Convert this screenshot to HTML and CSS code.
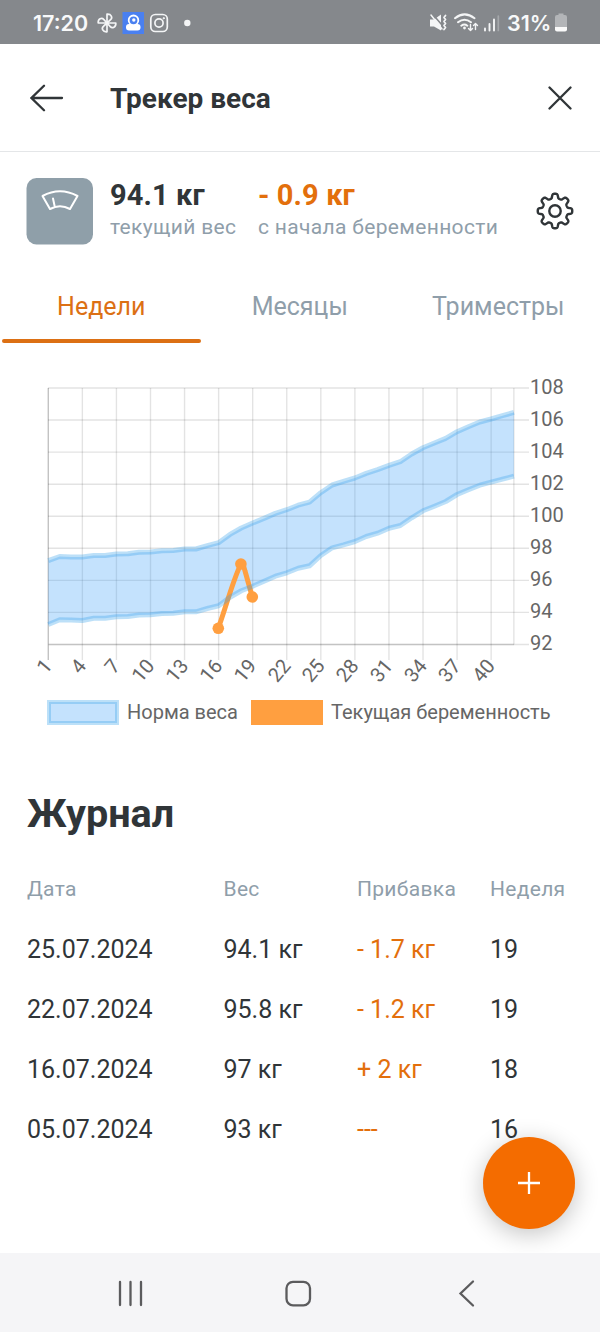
FILE: index.html
```html
<!DOCTYPE html>
<html lang="ru">
<head>
<meta charset="utf-8">
<title>Трекер веса</title>
<link rel="stylesheet" href="styles.css">
</head>
<body>
<div class="screen">
  <div class="status">
    <span class="clock">17:20</span>
    <svg class="status-left" width="100" height="26" viewBox="94 10 100 26" fill="none" stroke="#f4f5f6" stroke-width="1.7" stroke-linecap="round" stroke-linejoin="round">
      <path d="M107 23V14.200c4.400-.4 5.800 3.600 3.600 5.500L107 23"/>
      <path d="M107 23V14.200c4.400-.4 5.800 3.600 3.600 5.500L107 23" transform="rotate(90 107 23)"/>
      <path d="M107 23V14.200c4.400-.4 5.800 3.600 3.600 5.500L107 23" transform="rotate(180 107 23)"/>
      <path d="M107 23V14.200c4.400-.4 5.800 3.600 3.600 5.500L107 23" transform="rotate(270 107 23)"/>
      <rect x="122.500" y="12" width="21.500" height="22" fill="#4a80f0" stroke="none"/>
      <rect x="126" y="24" width="14.500" height="6.500" rx="3" fill="#fff" stroke="none"/>
      <circle cx="133.500" cy="20.300" r="4.800" fill="#4a80f0" stroke="#fff" stroke-width="1.800"/>
      <circle cx="133.800" cy="20" r="1.700" fill="#fff" stroke="none"/>
      <rect x="150.800" y="14.500" width="16.500" height="17" rx="4.500"/>
      <circle cx="159" cy="23" r="4.100"/>
      <circle cx="163.700" cy="18.200" r=".7" fill="#f4f5f6" stroke-width=".8"/>
      <circle cx="187.300" cy="23" r="3.200" fill="#f4f5f6" stroke="none"/>
    </svg>
    <svg class="status-right" width="73" height="26" viewBox="428 10 73 26" fill="none" stroke="#f4f5f6" stroke-width="1.700" stroke-linecap="round" stroke-linejoin="round">
      <path d="M430 19.500h4l7-5v16L434 26.500h-4z" fill="#f4f5f6" stroke="none"/>
      <path d="M432.500 14l9.500 11" stroke="#85888c" stroke-width="1.600"/>
      <path d="M431 15l11 14" stroke-width="1.500"/>
      <path d="M445.500 15.500l-1.500 2 1.500 2-1.500 2 1.500 2-1.500 2 1.500 2-1.500 2" stroke-width="1.800"/>
      <path d="M455 18.200q9.500-7.700 19.500 0M458 22.200q6.500-5 13 0M461.300 25.700q3.200-2.400 6 0" stroke-width="2"/>
      <circle cx="464.500" cy="28" r="1.400" fill="#f4f5f6" stroke="none"/>
      <path d="M470.500 24.500v6m-2-2l2 2 2-2M475.500 29.500v-6m-2 2l2-2 2 2" stroke-width="1.400"/>
      <path d="M485 28.500v2M489.500 24v6.500M494 19.500v11" stroke-width="1.900"/>
      <path d="M498.300 16v14.500" stroke="#a5a8ab" stroke-width="1.700"/>
    </svg>
    <span class="percent">31%</span>
    <svg class="battery" width="12" height="20" viewBox="0 0 12 20">
      <path d="M3.500 2V.5h5V2h1.500a2 2 0 0 1 2 2v10H0V4a2 2 0 0 1 2-2z" fill="#b3b5b8"/>
      <path d="M0 14h12v2.500a2 2 0 0 1-2 2H2a2 2 0 0 1-2-2z" fill="#fafafa"/>
    </svg>
  </div>

  <header class="header">
    <svg class="back" width="34" height="28" viewBox="0 0 34 28"><path d="M32 14H1.500M14 1.800L1.500 14L14 26.200"/></svg>
    <h1 class="title">Трекер веса</h1>
    <svg class="close" width="24" height="24" viewBox="0 0 24 24"><path d="M1.500 1.500l21 21M22.500 1.500l-21 21"/></svg>
  </header>

  <section class="summary">
    <svg class="scale" width="67" height="67" viewBox="0 0 67 67">
      <rect x=".5" width="66.500" height="66.500" rx="10" fill="#8f9fa9"/>
      <path d="M16.500 18Q34 8.500 51.500 18L44 31Q34 25.500 24 31ZM27 20.500l1.500 7" fill="none" stroke="#fff" stroke-width="2" stroke-linejoin="round" stroke-linecap="round"/>
    </svg>
    <div class="stat current">
      <b class="value">94.1 кг</b>
      <span class="caption">текущий вес</span>
    </div>
    <div class="stat change">
      <b class="value accent">- 0.9 кг</b>
      <span class="caption">с начала беременности</span>
    </div>
    <svg class="gear" width="38" height="38" viewBox="-19 -19 38 38" fill="none" stroke="#303538" stroke-width="2.400" stroke-linejoin="round">
      <path id="gear-path"/>
      <circle r="5.700"/>
    </svg>
  </section>

  <nav class="tabs">
    <span class="tab active">Недели</span>
    <span class="tab">Месяцы</span>
    <span class="tab">Триместры</span>
  </nav>

  <svg class="chart" id="chart" width="600" height="330" viewBox="0 370 600 330"></svg>

  <div class="legend">
    <span class="swatch norm"></span><span class="norm-label">Норма веса</span>
    <span class="swatch own"></span><span class="own-label">Текущая беременность</span>
  </div>

  <section class="journal">
    <h2 class="journal-title">Журнал</h2>
    <div class="row head"><span>Дата</span><span>Вес</span><span>Прибавка</span><span>Неделя</span></div>
    <div class="row"><span>25.07.2024</span><span>94.1 кг</span><span class="accent">- 1.7 кг</span><span>19</span></div>
    <div class="row"><span>22.07.2024</span><span>95.8 кг</span><span class="accent">- 1.2 кг</span><span>19</span></div>
    <div class="row"><span>16.07.2024</span><span>97 кг</span><span class="accent">+ 2 кг</span><span>18</span></div>
    <div class="row"><span>05.07.2024</span><span>93 кг</span><span class="accent">---</span><span>16</span></div>
  </section>

  <div class="fab"><svg width="24" height="24" viewBox="0 0 24 24"><path d="M12 1v22M1 12h22" stroke="#fff" stroke-width="2.300"/></svg></div>

  <footer class="navbar">
    <svg width="600" height="79" viewBox="0 1253 600 79" fill="none" stroke="#5b5b5d" stroke-width="2.300" stroke-linecap="round">
      <path d="M120 1282v23M130.500 1282v23M141 1282v23"/>
      <rect x="286.500" y="1281.800" width="23.500" height="23.500" rx="6.500"/>
      <path d="M473 1281.500L460.500 1293.500L473 1305.500"/>
    </svg>
  </footer>
</div>
<script src="chart.js"></script>
</body>
</html>
```
FILE: chart.js
```js
// Vertical positions of the norm band for weeks 1 to 42
const upper = [561, 556.8, 557.3, 557.3, 555.8, 555.8, 554.2, 554, 552.5, 552.3, 551, 550.7, 549.3, 549.3, 546, 543, 534.7, 528.3, 523.3, 518.7, 513.7, 510, 505.5, 502.5, 493, 485.3, 481.7, 478.3, 473.7, 470, 465.7, 462, 454.3, 448, 443.3, 438.7, 432, 427, 422.3, 419.3, 416, 412.7];
const lower = [624, 619.3, 619.5, 620, 617.7, 617.7, 616.3, 616.1, 614.5, 614.3, 613, 612.8, 611.3, 611.3, 608, 605.3, 596.7, 590.3, 585.7, 580.7, 575.7, 572.3, 567.7, 565.3, 555, 547.3, 544.3, 541, 536, 532.7, 527.7, 525, 517.3, 510.3, 505.7, 501, 494, 489.3, 484.7, 481.7, 478.7, 475.7];
const x = week => 48.3 + (week - 1) * 11.355;
const y = kg => 388 + (108 - kg) * 16.03;
const points = (list, dy) => list.map((v, i) => x(i + 1).toFixed(1) + ',' + (v + dy).toFixed(1));
const top_ = points(upper, -0.3);
const bottom = points(lower, 0.5);

let out = '';
for (let kg = 92; kg <= 108; kg += 2) {
  out += `<path class="grid" d="M48 ${y(kg)}H529"/>`;
  out += `<text class="axis" x="530" y="${y(kg) + 6}">${kg}</text>`;
}
for (let week = 1; week <= 40; week += 3) {
  out += `<path class="grid" d="M${x(week)} 388V660"/>`;
  out += `<text class="axis" text-anchor="end" transform="translate(${x(week) - 2} 660.500) rotate(-50)" x="0" y="9">${week}</text>`;
}
out += `<path class="grid" d="M${x(42)} 388V644.500"/><path class="edge" d="M48.300 388V660M48.300 644.500H514"/>`;
out += `<polygon class="band" points="${top_.join(' ')} ${[...bottom].reverse().join(' ')}"/>`;
out += '<path class="own-line" d="M218.300 628.300C226 607 233 580 240.500 565Q243 562 245 571L252.300 597"/>';
out += `<polyline class="band-line" points="${top_.join(' ')}"/><polyline class="band-line" points="${bottom.join(' ')}"/>`;
out += '<g class="own-dots"><circle cx="218.300" cy="628.300" r="5.800"/><circle cx="240.900" cy="564" r="5.800"/><circle cx="252.300" cy="597" r="5.800"/></g>';
document.getElementById('chart').innerHTML = out;

// Eight-toothed gear outline
let gear = '';
for (let i = 0; i <= 240; i++) {
  const a = i / 240 * Math.PI * 2;
  const r = 15 + 2.3 * Math.tanh(2.2 * Math.cos(8 * a));
  gear += (i ? 'L' : 'M') + (r * Math.sin(a)).toFixed(2) + ' ' + (-r * Math.cos(a)).toFixed(2);
}
document.getElementById('gear-path').setAttribute('d', gear + 'Z');
```
FILE: styles.css
```css
* { box-sizing: border-box; }
body { margin: 0; background: #fff; color: #303538; font-family: Roboto, "Noto Sans", sans-serif; }
svg { display: block; flex: none; }
.screen { position: relative; display: flex; flex-direction: column; width: 600px; height: 1332px; overflow: hidden; }
.status { display: flex; align-items: center; height: 44px; padding-left: 33px; background: #85888c; color: #f8f9fa; font: 600 21.5px/44px Inter, sans-serif; }
.clock { width: 61px; padding-top: 2px; }
.status-left { margin-top: 2px; }
.status-right { margin: 2px 0 0 234px; }
.percent { width: 48px; margin-left: 6px; padding-top: 2px; }
.battery { margin-top: 2px; }
.header { display: flex; align-items: center; height: 108px; padding: 0 28px 0 30px; border-bottom: 1px solid #e4e6e8; }
.back, .close { fill: none; stroke: #303538; stroke-width: 2.3; stroke-linecap: round; }
.title { margin: 2px auto 0 46px; font-size: 28px; line-height: 32px; font-weight: 700; }
.summary { display: flex; height: 118px; padding: 25px 26px 0 26px; }
.scale { margin-top: 1px; }
.stat { display: flex; flex-direction: column; margin-left: 17px; white-space: nowrap; }
.current { width: 131px; }
.value { padding-top: 1px; font-size: 29px; line-height: 34px; letter-spacing: .1px; }
.caption { margin-top: 2px; color: #8f9eaa; font-size: 21px; line-height: 26px; letter-spacing: .33px; }
.gear { margin: 15px 0 0 auto; }
.accent { color: #e36f0c; }
.tabs { display: grid; grid-template-columns: repeat(3, 198.500px); height: 73px; padding-left: 2px; }
.tab { position: relative; height: 73px; padding-top: 21px; text-align: center; color: #8f9eaa; font-size: 25px; line-height: 32px; }
.active { color: #dc7014; }
.active::after { content: ""; position: absolute; left: 0; right: 0; bottom: 0.5px; height: 3.5px; border-radius: 2px; background: #dc7014; }
.chart { margin-top: 27px; }
.grid { stroke: rgba(0, 0, 0, .11); stroke-width: 1.4; }
.edge { fill: none; stroke: rgba(0, 0, 0, .14); stroke-width: 1.4; }
.axis { fill: #666; font-size: 20px; }
.band { fill: rgba(58, 160, 247, .3); }
.band-line { fill: none; stroke: rgba(54, 162, 235, .33); stroke-width: 5; stroke-linejoin: round; }
.own-line { fill: none; stroke: #ff9f40; stroke-width: 5; }
.own-dots { fill: #ff9f40; }
.legend { display: flex; align-items: center; height: 25px; padding-left: 47px; color: #666; font-size: 20px; line-height: 25px; white-space: nowrap; }
.swatch { width: 72px; height: 25px; }
.norm { border: 2.5px solid #bce0f8; background: #c4e2fd; box-shadow: inset 0 0 0 2px #96cdf5; }
.own { background: #ff9f40; }
.norm-label { width: 132px; padding-left: 8px; }
.own-label { padding-left: 8px; }
.journal { padding: 67px 0 0 27px; }
.journal-title { margin: 0 0 23px; font-size: 39.6px; line-height: 44px; font-weight: 700; }
.row { display: grid; grid-template-columns: 196.500px 133.500px 133px 100px; height: 60px; align-items: center; font-size: 25px; }
.head { color: #8f9eaa; font-size: 21px; letter-spacing: .3px; }
.fab { position: absolute; left: 483px; top: 1137px; display: flex; align-items: center; justify-content: center; width: 92px; height: 92px; border-radius: 50%; background: #f46c00; box-shadow: 0 5px 24px rgba(0, 0, 0, .24); }
.navbar { margin-top: auto; height: 79px; background: #f5f5f7; z-index: 1; }
```
